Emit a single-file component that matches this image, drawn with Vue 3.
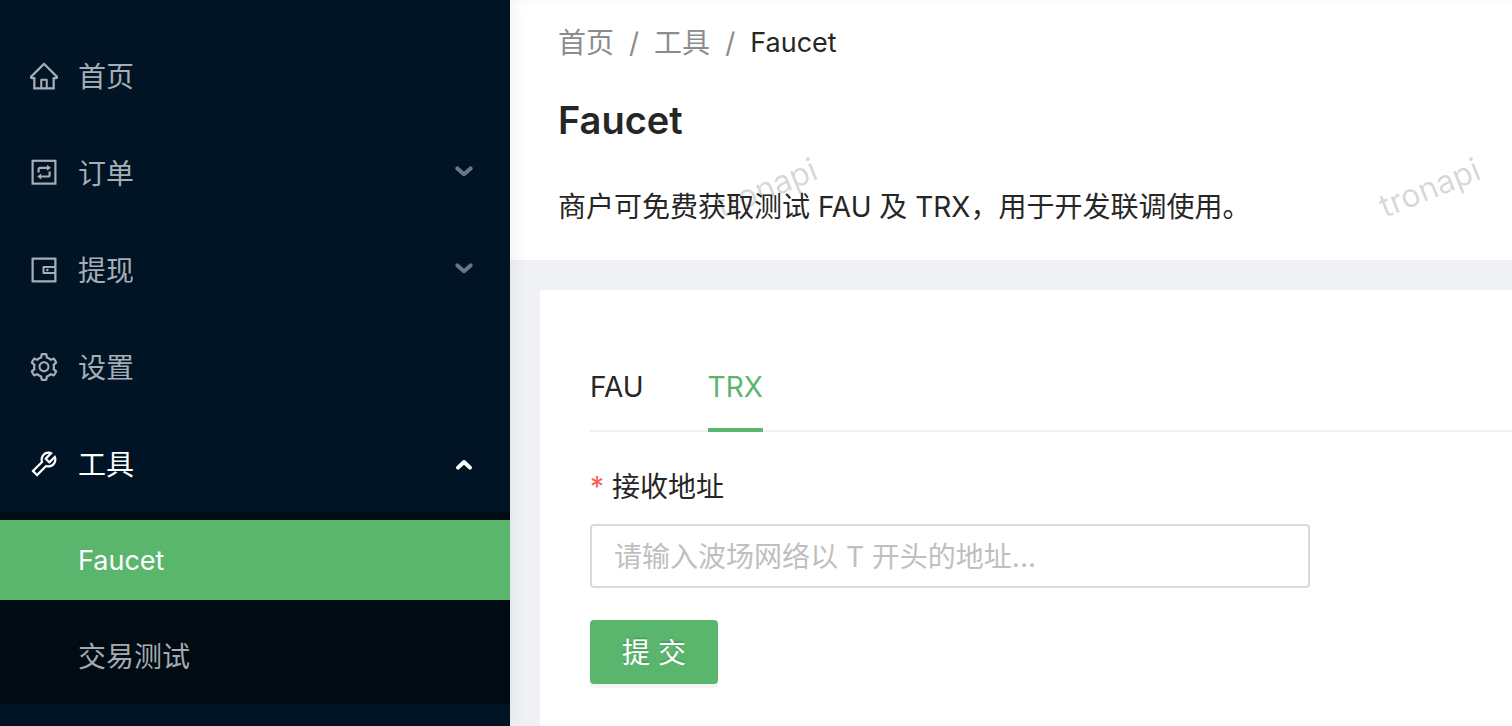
<script setup>
import { ref } from 'vue'

const icons = {
  home: 'M946.5 505L560.1 118.8l-25.9-25.9a31.5 31.5 0 00-44.4 0L77.5 505a63.9 63.9 0 00-18.8 46c.4 35.2 29.7 63.3 64.9 63.3h42.5V940h691.8V614.3h43.4c17.1 0 33.2-6.7 45.3-18.8a63.6 63.6 0 0018.7-45.3c0-17-6.7-33.1-18.8-45.2zM568 868H456V664h112v204zm217.9-325.7V868H632V640c0-22.1-17.9-40-40-40H432c-22.1 0-40 17.9-40 40v228H238.1V542.3h-96l370-369.7 23.1 23.1L882 542.3h-96.1z',
  wallet: 'M880 112H144c-17.7 0-32 14.3-32 32v736c0 17.7 14.3 32 32 32h736c17.7 0 32-14.3 32-32V144c0-17.7-14.3-32-32-32zm-40 464H528V448h312v128zm0 264H184V184h656v200H496c-17.7 0-32 14.3-32 32v192c0 17.7 14.3 32 32 32h344v200zM580 512a40 40 0 1080 0 40 40 0 10-80 0z',
  setting: 'M924.8 625.7l-65.5-56c3.1-19 4.7-38.4 4.7-57.8s-1.6-38.8-4.7-57.8l65.5-56a32.03 32.03 0 009.3-35.2l-.9-2.6a443.74 443.74 0 00-79.7-137.9l-1.8-2.1a32.12 32.12 0 00-35.1-9.5l-81.3 28.9c-30-24.6-63.5-44-99.7-57.6l-15.7-85a32.05 32.05 0 00-25.8-25.7l-2.7-.5c-52.1-9.4-106.9-9.4-159 0l-2.7.5a32.05 32.05 0 00-25.8 25.7l-15.8 85.4a351.86 351.86 0 00-99 57.4l-81.9-29.1a32 32 0 00-35.1 9.5l-1.8 2.1a446.02 446.02 0 00-79.7 137.9l-.9 2.6c-4.5 12.5-.8 26.5 9.3 35.2l66.3 56.6c-3.1 18.8-4.6 38-4.6 57.1 0 19.2 1.5 38.4 4.6 57.1L99 625.5a32.03 32.03 0 00-9.3 35.2l.9 2.6c18.1 50.4 44.9 96.9 79.7 137.9l1.8 2.1a32.12 32.12 0 0035.1 9.5l81.9-29.1c29.8 24.5 63.1 43.9 99 57.4l15.8 85.4a32.05 32.05 0 0025.8 25.7l2.7.5a449.4 449.4 0 00159 0l2.7-.5a32.05 32.05 0 0025.8-25.7l15.7-85a350 350 0 0099.7-57.6l81.3 28.9a32 32 0 0035.1-9.5l1.8-2.1c34.8-41.1 61.6-87.5 79.7-137.9l.9-2.6c4.5-12.3.8-26.3-9.3-35zM788.3 465.9c2.5 15.1 3.8 30.6 3.8 46.1s-1.3 31-3.8 46.1l-6.6 40.1 74.7 63.9a370.03 370.03 0 01-42.6 73.6L721 702.8l-31.4 25.8c-23.9 19.6-50.5 35-79.3 45.8l-38.1 14.3-17.9 97a377.5 377.5 0 01-85 0l-17.9-97.2-37.8-14.5c-28.5-10.8-55-26.2-78.7-45.7l-31.4-25.9-93.4 33.2c-17-22.9-31.2-47.6-42.6-73.6l75.5-64.5-6.5-40c-2.4-14.9-3.7-30.3-3.7-45.5 0-15.3 1.2-30.6 3.7-45.5l6.5-40-75.5-64.5c11.3-26.1 25.6-50.7 42.6-73.6l93.4 33.2 31.4-25.9c23.7-19.5 50.2-34.9 78.7-45.7l37.9-14.3 17.9-97.2c28.1-3.2 56.8-3.2 85 0l17.9 97 38.1 14.3c28.7 10.8 55.4 26.2 79.3 45.8l31.4 25.8 92.8-32.9c17 22.9 31.2 47.6 42.6 73.6L781.8 426l6.5 39.9zM512 326c-97.2 0-176 78.8-176 176s78.8 176 176 176 176-78.8 176-176-78.8-176-176-176zm79.2 255.2A111.6 111.6 0 01512 614c-29.9 0-58-11.7-79.2-32.8A111.6 111.6 0 01400 502c0-29.9 11.7-58 32.8-79.2C454 401.6 482.1 390 512 390c29.9 0 58 11.6 79.2 32.8A111.6 111.6 0 01624 502c0 29.9-11.7 58-32.8 79.2z',
  tool: 'M876.6 239.5c-.5-.9-1.2-1.8-2-2.5-5-5-13.1-5-18.1 0L684.2 409.3l-67.9-67.9L788.7 169c.8-.8 1.4-1.6 2-2.5 3.6-6.1 1.6-13.9-4.5-17.5-98.2-58-226.8-44.7-311.3 39.7-67 67-89.2 162-66.5 247.4l-293 293c-3 3-2.8 7.9.3 11l169.7 169.7c3.1 3.1 8.1 3.3 11 .3l292.9-292.9c85.5 22.8 180.5.7 247.6-66.4 84.4-84.5 97.7-213.1 39.7-311.3zM786 499.8c-58.1 58.1-145.3 69.3-214.6 33.6l-8.8 8.8-.1-.1-274 274.1-79.2-79.2 230.1-230.1s0 .1.1.1l52.8-52.8c-35.7-69.3-24.5-156.5 33.6-214.6a184.2 184.2 0 01144-53.5L537 318.9a32.05 32.05 0 000 45.3l124.5 124.5a32.05 32.05 0 0045.3 0l132.8-132.8c3.7 51.8-14.4 104.8-53.6 143.9z'
}

const menu = [
  { label: '首页', icon: 'home' },
  { label: '订单', icon: 'order', expandable: true },
  { label: '提现', icon: 'wallet', expandable: true },
  { label: '设置', icon: 'setting' },
  { label: '工具', icon: 'tool', expandable: true, open: true, children: ['Faucet', '交易测试'] }
]

const tabs = ['FAU', 'TRX']
const activeTab = ref('TRX')
const address = ref('')
</script>

<template>
  <div class="layout">
    <nav class="sider">
      <ul class="menu">
        <li v-for="item in menu" :key="item.label">
          <component
            :is="item.expandable ? 'button' : 'a'"
            class="item"
            :class="{ open: item.open }"
            :href="item.expandable ? null : '#'"
            :type="item.expandable ? 'button' : null"
            :aria-expanded="item.expandable ? !!item.open : null"
          >
            <svg v-if="item.icon === 'order'" class="icon" viewBox="0 0 28 28" fill="none" stroke="currentColor" stroke-width="2.2">
              <rect x="2.6" y="1.8" width="22.8" height="22.8" />
              <path d="M8.6 13.4v-3.1q0-1.5 1.5-1.5H18M19.6 12.6v3.4q0 1.5-1.5 1.5H10.2" />
              <path d="M17 5.8v6l4-3zM11.2 14.5v6l-4-3z" fill="currentColor" stroke="none" />
            </svg>
            <svg v-else class="icon" viewBox="64 64 896 896" fill="currentColor">
              <path :d="icons[item.icon]" />
            </svg>
            <span class="label">{{ item.label }}</span>
            <svg v-if="item.expandable" class="arrow" viewBox="0 0 20 14" fill="none" stroke="currentColor" stroke-width="4" stroke-linecap="round" stroke-linejoin="round">
              <path :d="item.open ? 'M4 10.6l6-5.6 6 5.6' : 'M3.4 2.4l6.6 5.8 6.6-5.8'" />
            </svg>
          </component>
          <ul v-if="item.children" class="submenu">
            <li v-for="(child, i) in item.children" :key="child">
              <a href="#" class="subitem" :class="{ selected: i === 0 }">{{ child }}</a>
            </li>
          </ul>
        </li>
      </ul>
    </nav>

    <main class="main">
      <header class="page-header">
        <nav class="breadcrumb">
          <a href="#">首页</a><span class="slash">/</span>
          <a href="#">工具</a><span class="slash">/</span>
          <span class="current">Faucet</span>
        </nav>
        <h1>Faucet</h1>
        <p>商户可免费获取测试 FAU 及 TRX，用于开发联调使用。</p>
        <span class="watermark first" aria-hidden="true">tronapi</span>
        <span class="watermark second" aria-hidden="true">tronapi</span>
      </header>

      <section class="card">
        <div class="tabs" role="tablist">
          <button
            v-for="tab in tabs"
            :key="tab"
            type="button"
            role="tab"
            class="tab"
            :class="{ active: tab === activeTab }"
            :aria-selected="tab === activeTab"
            @click="activeTab = tab"
          >{{ tab }}</button>
        </div>
        <form @submit.prevent>
          <label for="address"><span class="required">*</span>接收地址</label>
          <input id="address" v-model="address" type="text" placeholder="请输入波场网络以 T 开头的地址...">
          <button type="submit" class="submit">提 交</button>
        </form>
      </section>
    </main>
  </div>
</template>

<style>
body {
  background: #f0f1f5;
}
</style>

<style scoped>
.layout {
  display: flex;
  min-height: 100vh;
  overflow: hidden;
  font-family: Inter, "Noto Sans CJK SC", sans-serif;
  font-size: 28px;
  line-height: 44px;
  color: #262626;
}
.layout * {
  box-sizing: border-box;
}
button,
input {
  font: inherit;
}
a {
  text-decoration: none;
}
ul {
  list-style: none;
  margin: 0;
  padding: 0;
}
.sider {
  position: relative;
  z-index: 1;
  flex: 0 0 510px;
  padding-top: 36px;
  background: #001425;
  box-shadow: 4px 0 16px rgba(0, 21, 41, 0.05);
}
.menu {
  display: flex;
  flex-direction: column;
  gap: 17px;
}
.item {
  display: flex;
  align-items: center;
  width: 100%;
  height: 80px;
  padding: 0 36px 0 30px;
  border: 0;
  background: none;
  color: #a6adb4;
  text-align: left;
  cursor: pointer;
}
.item.open {
  color: #fff;
}
.icon {
  width: 28px;
  height: 28px;
  margin-right: 20px;
}
.label {
  padding-top: 2px;
}
.arrow {
  width: 20px;
  height: 14px;
  margin-left: auto;
  opacity: 0.65;
}
.open .arrow {
  opacity: 1;
}
.submenu {
  display: flex;
  flex-direction: column;
  gap: 16px;
  margin-top: 8px;
  padding: 8px 0;
  background: #000b14;
}
.subitem {
  display: block;
  padding: 19px 78px 17px;
  color: #a6a9ad;
}
.subitem.selected {
  background: #5ab56d;
  color: #fff;
  font-size: 27px;
}
.main {
  flex: 1;
  min-width: 0;
  display: flex;
  flex-direction: column;
}
.page-header {
  position: relative;
  padding: 21px 48px 31px;
  background: linear-gradient(#f9f9f9, #fff 6px);
}
.breadcrumb {
  display: flex;
  color: #8c8c8c;
}
.breadcrumb a {
  color: inherit;
}
.slash {
  margin: 0 15px;
}
.current {
  color: #262626;
  font-size: 27px;
}
h1 {
  margin: 23px 0 33px;
  font-size: 38px;
  font-weight: 600;
  line-height: 64px;
}
.page-header p {
  margin: 0;
}
.watermark {
  position: absolute;
  top: 166px;
  font-size: 32px;
  color: rgba(0, 0, 0, 0.16);
  transform: rotate(-22deg);
  pointer-events: none;
}
.first {
  left: 204px;
}
.second {
  left: 867px;
}
.card {
  flex: 1;
  margin: 30px 0 0 30px;
  padding: 50px 0 42px 50px;
  background: #fff;
}
.tabs {
  display: flex;
  gap: 64px;
  box-shadow: inset 0 -2px #f0f0f0;
}
.tab {
  padding: 25px 0 19px;
  border: 0;
  border-bottom: 4px solid transparent;
  background: none;
  color: #262626;
  cursor: pointer;
}
.tab.active {
  color: #5ab56d;
  border-color: #5ab56d;
}
form {
  display: flex;
  flex-direction: column;
  align-items: flex-start;
  padding-top: 33px;
}
.required {
  margin-right: 8px;
  color: #f5605c;
}
input {
  width: 100%;
  max-width: 720px;
  height: 64px;
  margin: 15px 0 32px;
  padding: 2px 22px 0;
  border: 2px solid #d9d9d9;
  border-radius: 4px;
  background: #fff;
  color: #262626;
}
input::placeholder {
  color: #bfbfbf;
}
.submit {
  height: 64px;
  padding: 2px 32px 0;
  border: 0;
  border-radius: 4px;
  background: #5ab56d;
  box-shadow: 0 4px 0 rgba(0, 0, 0, 0.04);
  color: #fff;
  text-shadow: 0 -2px 0 rgba(0, 0, 0, 0.12);
  cursor: pointer;
}
</style>
